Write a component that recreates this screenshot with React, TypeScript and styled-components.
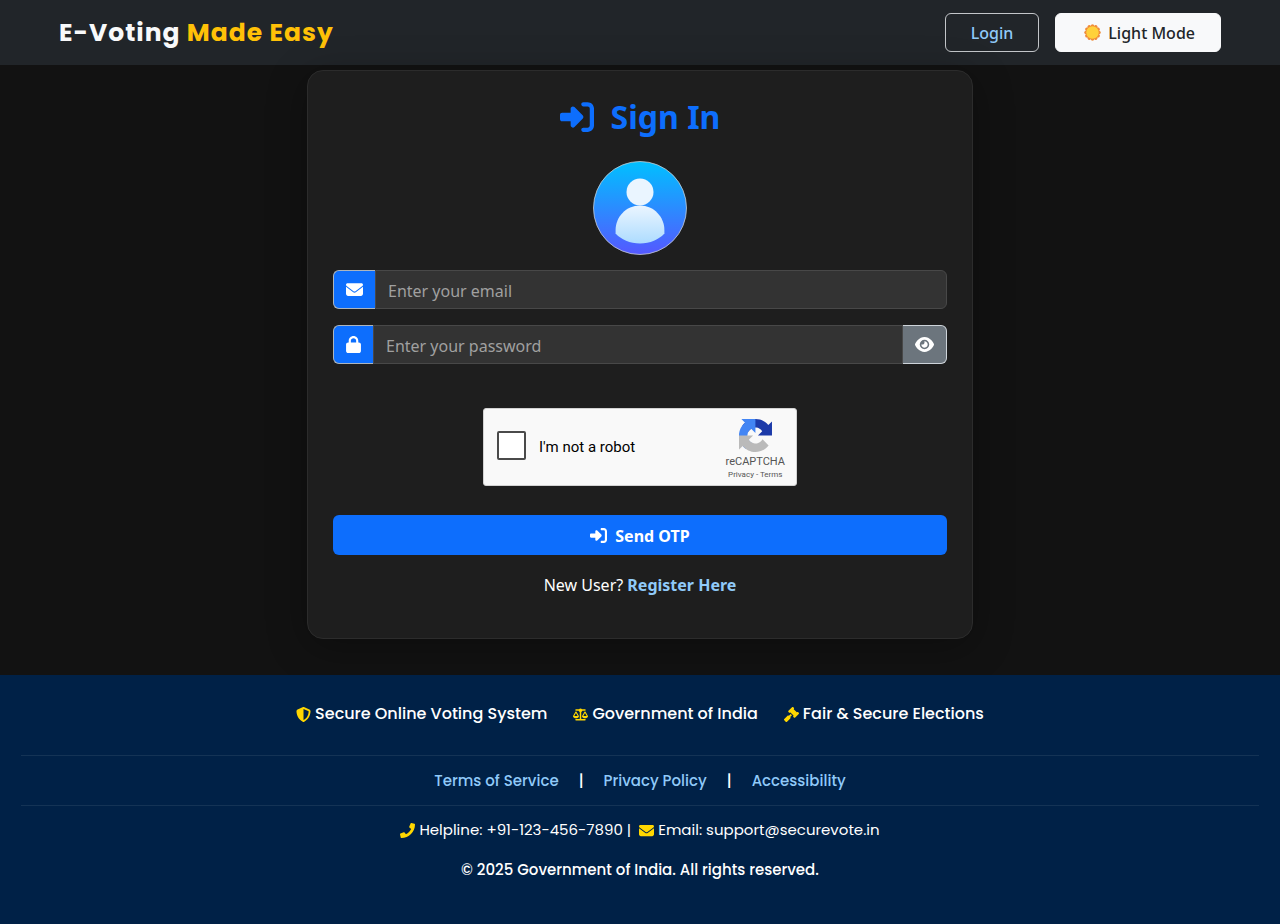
import React, { useState } from "react";
import styled, { createGlobalStyle, css } from "styled-components";
import { FaPhone } from "react-icons/fa";
import {
  FaEnvelope,
  FaEye,
  FaGavel,
  FaLock,
  FaRightToBracket,
  FaScaleBalanced,
  FaShieldHalved,
} from "react-icons/fa6";

const bodyFont = '"Segoe UI", "Noto Sans", "Open Sans", sans-serif';
const brandFont = 'Poppins, Inter, "Open Sans", sans-serif';

const GlobalStyle = createGlobalStyle`
  *, *::before, *::after { box-sizing: border-box; }
  body {
    margin: 0;
    background: #121212;
    color: #fff;
    font: 400 16px/26px ${bodyFont};
  }
  input, button { font: inherit; }
  svg { flex: none; }
`;

const Page = styled.div`
  display: flex;
  flex-direction: column;
  min-height: 100vh;
`;

const NavBar = styled.header`
  display: flex;
  align-items: center;
  justify-content: space-between;
  padding: 13px 59px;
  background: #212529;
`;

const Brand = styled.a`
  color: #f8f9fa;
  font: 700 25px/39px ${brandFont};
  letter-spacing: 1px;
  text-decoration: none;
`;

const BrandAccent = styled.span`
  color: #ffc107;
`;

const NavActions = styled.nav`
  display: flex;
  gap: 16px;
`;

const navButton = css`
  display: flex;
  align-items: center;
  justify-content: center;
  gap: 7px;
  height: 39px;
  padding: 0 25px;
  border: 1px solid #f8f9fa;
  border-radius: 6px;
  font-weight: 500;
  cursor: pointer;
`;

const LoginLink = styled.a`
  ${navButton}
  border-color: #c3c6c9;
  color: #90caf9;
  text-decoration: none;
`;

const ThemeButton = styled.button`
  ${navButton}
  padding: 0 25px 0 28px;
  background: #f8f9fa;
  color: #212529;
`;

const Main = styled.main`
  display: flex;
  justify-content: center;
  padding: 5px 16px 36px;
`;

const Card = styled.form`
  display: flex;
  flex-direction: column;
  width: 100%;
  max-width: 666px;
  padding: 24px 25px 40px;
  border: 1px solid #2c2c2c;
  border-radius: 16px;
  background: #1e1e1e;
  box-shadow: 0 8px 40px rgba(0, 0, 0, 0.3);
`;

const Title = styled.h1`
  display: flex;
  align-items: center;
  justify-content: center;
  gap: 17px;
  margin: 0 0 22px;
  color: #0d6efd;
  font-size: 32px;
  font-weight: 700;
  line-height: 44px;
`;

const Avatar = styled.svg`
  align-self: center;
  width: 94px;
  height: 94px;
  margin-bottom: 15px;
`;

const Field = styled.div`
  display: flex;
  height: 39px;
  margin-bottom: 16px;
`;

const FieldIcon = styled.label`
  display: flex;
  align-items: center;
  padding: 0 12px;
  border: 1px solid #adb5bd;
  border-right: 0;
  border-radius: 6px 0 0 6px;
  background: #0d6efd;
`;

const LockIcon = styled(FaLock)`
  width: 15px;
  height: 17px;
`;

const FieldInput = styled.input<{ $joined?: boolean }>`
  flex: 1;
  min-width: 0;
  padding: 2px 12px 0;
  border: 1px solid #484848;
  border-radius: ${(p) => (p.$joined ? "0" : "0 6px 6px 0")};
  background: #333;
  color: #fff;
  outline: none;

  &::placeholder {
    color: #a0a0a0;
    opacity: 1;
  }
`;

const RevealButton = styled.button`
  display: flex;
  align-items: center;
  padding: 0 12px;
  border: 1px solid #ced4da;
  border-left: 0;
  border-radius: 0 6px 6px 0;
  background: #6c757d;
  color: #fff;
  cursor: pointer;
`;

const Captcha = styled.div`
  display: flex;
  align-self: center;
  align-items: center;
  justify-content: space-between;
  width: 314px;
  height: 78px;
  margin: 28px 0 29px;
  padding: 0 11px 0 13px;
  border: 1px solid #d3d3d3;
  border-radius: 3px;
  background: #f9f9f9;
  color: #000;
  font-family: Roboto, sans-serif;
`;

const RobotLabel = styled.label`
  display: flex;
  align-items: center;
  gap: 13px;
  font-size: 15px;
`;

const RobotBox = styled.input`
  appearance: none;
  width: 29px;
  height: 29px;
  margin: 0 0 3px;
  border: 2px solid #4a4a4a;
  border-radius: 2px;
  background: #fff;

  &:checked {
    background: #4285f4;
  }
`;

const CaptchaBrand = styled.div`
  display: flex;
  flex-direction: column;
  align-items: center;
  padding-top: 6px;
  color: #555;
  line-height: 13px;
`;

const CaptchaName = styled.span`
  margin-top: 3px;
  font-size: 11px;
`;

const CaptchaLinks = styled.span`
  font-size: 8px;

  a {
    color: inherit;
    text-decoration: none;
  }
`;

const SubmitButton = styled.button`
  display: flex;
  align-items: center;
  justify-content: center;
  gap: 8px;
  height: 40px;
  padding: 1px 0 0;
  border: 0;
  border-radius: 6px;
  background: #0d6efd;
  color: #fff;
  font-weight: 700;
  cursor: pointer;
`;

const RegisterText = styled.p`
  margin: 17px 0 0;
  text-align: center;
`;

const RegisterLink = styled.a`
  color: #90caf9;
  font-weight: 700;
  text-decoration: none;
`;

const Footer = styled.footer`
  flex: 1;
  padding: 26px 21px;
  background: #002147;
  font: 500 15px/26px ${brandFont};
`;

const FooterRow = styled.div<{ $gap: number }>`
  display: flex;
  flex-wrap: wrap;
  justify-content: center;
  gap: ${(p) => p.$gap}px;
`;

const Highlights = styled(FooterRow)`
  margin-bottom: 28px;
  font-size: 16px;
`;

const FooterNav = styled(FooterRow)`
  padding: 12px 0 11px;
  border: solid #143355;
  border-width: 1px 0;
`;

const FooterLink = styled.a`
  color: #90caf9;
  text-decoration: none;
`;

const Contacts = styled(FooterRow)`
  margin-top: 11px;
  font-weight: 400;
`;

const FooterItem = styled.span`
  display: flex;
  align-items: center;
  gap: 4px;

  svg {
    color: #ffd700;
  }
`;

const Copyright = styled.p`
  margin: 14px 0 0;
  text-align: center;
`;

const SunIcon = () => (
  <svg width="17" height="17" viewBox="0 0 34 34" aria-hidden="true">
    {Array.from({ length: 12 }, (_, i) => (
      <circle key={i} cx="17" cy="4" r="3.5" fill="#f08c3a" transform={`rotate(${i * 30} 17 17)`} />
    ))}
    <circle cx="17" cy="17" r="14" fill="#f08c3a" />
    <circle cx="17" cy="17" r="12.5" fill="#ffd13b" />
  </svg>
);

const UserAvatar = () => (
  <Avatar viewBox="0 0 94 94" role="img" aria-label="User">
    <defs>
      <linearGradient id="sky" x1="0" y1="0" x2="0" y2="1">
        <stop offset="0" stopColor="#00c0ff" />
        <stop offset="1" stopColor="#5558ff" />
      </linearGradient>
      <linearGradient id="torso" x1="0" y1="0" x2="0" y2="1">
        <stop offset="0" stopColor="#ebf5ff" />
        <stop offset="1" stopColor="#addcff" />
      </linearGradient>
    </defs>
    <circle cx="47" cy="47" r="46.5" fill="url(#sky)" stroke="#c6cbd0" strokeWidth="0.8" />
    <circle cx="47" cy="31" r="13.5" fill="#eaf5ff" />
    <path
      d="M47 44.5C33 44.5 22.6 56 22.6 69V72.5C28 78.5 37 82.5 47 82.5S66 78.5 71.4 72.5V69C71.4 56 61 44.5 47 44.5Z"
      fill="url(#torso)"
    />
  </Avatar>
);

const CaptchaLogo = () => (
  <svg width="33" height="33" viewBox="0 0 64 64" aria-hidden="true">
    <path
      fill="#1c3aa9"
      d="M64 31.955l-.033-1.37V4.687l-7.16 7.16C50.948 4.674 42.033.093 32.05.093c-10.4 0-19.622 4.96-25.458 12.64l11.736 11.86a15.55 15.55 0 0 1 4.754-5.334c2.05-1.6 4.952-2.906 8.968-2.906.485 0 .86.057 1.135.163 4.976.393 9.288 3.14 11.828 7.124l-8.307 8.307L64 31.953"
    />
    <path
      fill="#4285f4"
      d="M31.862.094l-1.37.033H4.594l7.16 7.16C4.58 13.147 0 22.06 0 32.046c0 10.4 4.96 19.622 12.64 25.458L24.5 45.768a15.55 15.55 0 0 1-5.334-4.754c-1.6-2.05-2.906-4.952-2.906-8.968 0-.485.057-.86.163-1.135.393-4.976 3.14-9.288 7.124-11.828l8.307 8.307L31.86.095"
    />
    <path
      fill="#bababa"
      d="M.001 32.045l.033 1.37v25.898l7.16-7.16c5.86 7.173 14.774 11.754 24.76 11.754 10.4 0 19.622-4.96 25.458-12.64l-11.736-11.86a15.55 15.55 0 0 1-4.754 5.334c-2.05 1.6-4.952 2.906-8.968 2.906-.485 0-.86-.057-1.135-.163-4.976-.393-9.288-3.14-11.828-7.124l8.307-8.307-27.3.002"
    />
  </svg>
);

export default function App() {
  const [revealed, setRevealed] = useState(false);

  return (
    <Page>
      <GlobalStyle />
      <NavBar>
        <Brand href="#">
          E-Voting <BrandAccent>Made Easy</BrandAccent>
        </Brand>
        <NavActions>
          <LoginLink href="#">Login</LoginLink>
          <ThemeButton type="button">
            <SunIcon />
            Light Mode
          </ThemeButton>
        </NavActions>
      </NavBar>

      <Main>
        <Card onSubmit={(e) => e.preventDefault()}>
          <Title>
            <FaRightToBracket size={34} />
            Sign In
          </Title>
          <UserAvatar />
          <Field>
            <FieldIcon htmlFor="email" aria-label="Email">
              <FaEnvelope size={17} />
            </FieldIcon>
            <FieldInput id="email" type="email" placeholder="Enter your email" />
          </Field>
          <Field>
            <FieldIcon htmlFor="password" aria-label="Password">
              <LockIcon />
            </FieldIcon>
            <FieldInput
              id="password"
              type={revealed ? "text" : "password"}
              placeholder="Enter your password"
              $joined
            />
            <RevealButton type="button" aria-label="Show password" onClick={() => setRevealed(!revealed)}>
              <FaEye size={19} />
            </RevealButton>
          </Field>
          <Captcha>
            <RobotLabel>
              <RobotBox type="checkbox" />
              I'm not a robot
            </RobotLabel>
            <CaptchaBrand>
              <CaptchaLogo />
              <CaptchaName>reCAPTCHA</CaptchaName>
              <CaptchaLinks>
                <a href="#">Privacy</a> - <a href="#">Terms</a>
              </CaptchaLinks>
            </CaptchaBrand>
          </Captcha>
          <SubmitButton type="submit">
            <FaRightToBracket size={17} />
            Send OTP
          </SubmitButton>
          <RegisterText>
            New User? <RegisterLink href="#">Register Here</RegisterLink>
          </RegisterText>
        </Card>
      </Main>

      <Footer>
        <Highlights $gap={26}>
          <FooterItem>
            <FaShieldHalved size={15} />
            Secure Online Voting System
          </FooterItem>
          <FooterItem>
            <FaScaleBalanced size={15} />
            Government of India
          </FooterItem>
          <FooterItem>
            <FaGavel size={15} />
            Fair &amp; Secure Elections
          </FooterItem>
        </Highlights>
        <FooterNav $gap={20}>
          <FooterLink href="#">Terms of Service</FooterLink>
          <span>|</span>
          <FooterLink href="#">Privacy Policy</FooterLink>
          <span>|</span>
          <FooterLink href="#">Accessibility</FooterLink>
        </FooterNav>
        <Contacts $gap={8}>
          <FooterItem>
            <FaPhone size={15} />
            Helpline: +91-123-456-7890 |
          </FooterItem>
          <FooterItem>
            <FaEnvelope size={15} />
            Email: support@securevote.in
          </FooterItem>
        </Contacts>
        <Copyright>© 2025 Government of India. All rights reserved.</Copyright>
      </Footer>
    </Page>
  );
}
